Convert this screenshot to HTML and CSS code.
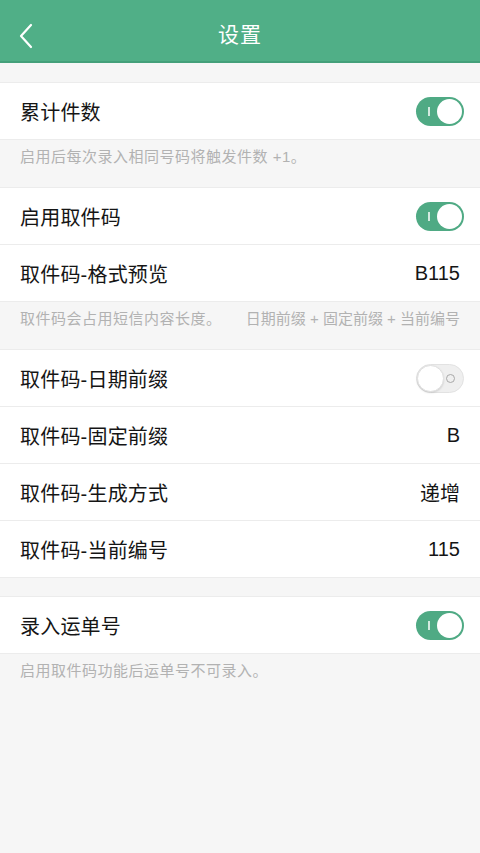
FILE: index.html
```html
<!DOCTYPE html>
<html lang="zh-CN">
<head>
<meta charset="utf-8">
<meta name="viewport" content="width=480">
<title>设置</title>
<link rel="stylesheet" href="styles.css">
</head>
<body>
<header class="topbar">
  <button class="back" aria-label="返回">
    <svg width="16" height="26" viewBox="0 0 16 26"><path d="M13 2 L3 13 L13 24" fill="none" stroke="#fff" stroke-width="2.2" stroke-linecap="round" stroke-linejoin="round"/></svg>
  </button>
  <h1 class="title">设置</h1>
</header>

<main class="content">
  <section class="group">
    <div class="row"><span class="label">累计件数</span><span class="switch on"><i class="mark"></i><i class="knob"></i></span></div>
  </section>
  <p class="note">启用后每次录入相同号码将触发件数 +1。</p>

  <section class="group">
    <div class="row"><span class="label">启用取件码</span><span class="switch on"><i class="mark"></i><i class="knob"></i></span></div>
    <div class="row"><span class="label">取件码-格式预览</span><span class="value">B115</span></div>
  </section>
  <p class="note split"><span>取件码会占用短信内容长度。</span><span class="formula">日期前缀 + 固定前缀 + 当前编号</span></p>

  <section class="group">
    <div class="row"><span class="label">取件码-日期前缀</span><span class="switch off"><i class="knob"></i><i class="ring"></i></span></div>
    <div class="row"><span class="label">取件码-固定前缀</span><span class="value">B</span></div>
    <div class="row"><span class="label">取件码-生成方式</span><span class="value">递增</span></div>
    <div class="row"><span class="label">取件码-当前编号</span><span class="value">115</span></div>
  </section>

  <section class="group spaced">
    <div class="row"><span class="label">录入运单号</span><span class="switch on"><i class="mark"></i><i class="knob"></i></span></div>
  </section>
  <p class="note">启用取件码功能后运单号不可录入。</p>
</main>
</body>
</html>
```

FILE: styles.css
```css
* { box-sizing: border-box; }
html, body { margin: 0; padding: 0; }
body {
  width: 480px;
  min-height: 853px;
  background: #f6f6f6;
  font-family: "Liberation Sans", "Noto Sans CJK SC", sans-serif;
  color: #151515;
}
.topbar {
  height: 63px;
  padding-top: 5px;
  background: #50af87;
  border-bottom: 2px solid #44a07a;
  display: flex;
  align-items: center;
  justify-content: center;
  position: relative;
}
.back {
  position: absolute;
  left: 18px;
  top: 23px;
  padding: 0;
  border: 0;
  background: none;
  display: flex;
}
.title {
  margin: 0;
  font-size: 21px;
  font-weight: normal;
  color: #fff;
  letter-spacing: 1px;
}
.content {
  padding-top: 19px;
}
.group {
  background: #fff;
  border-top: 1px solid #ececec;
}
.group.spaced { margin-top: 18px; }
.row {
  height: 57px;
  border-bottom: 1px solid #ececec;
  display: flex;
  align-items: center;
  justify-content: space-between;
  padding: 0 16px 0 20px;
}
.label {
  font-size: 20px;
  letter-spacing: 0.2px;
}
.value {
  font-size: 20px;
  padding-right: 4px;
}
.note {
  margin: 0;
  height: 47px;
  padding: 7px 20px 0 20px;
  font-size: 15px;
  line-height: 20px;
  color: #b2b2b2;
  letter-spacing: 0.5px;
}
.note.split {
  display: flex;
  justify-content: space-between;
}
.note .formula { letter-spacing: 0; }
.switch {
  position: relative;
  width: 48px;
  height: 29px;
  border-radius: 15px;
  display: block;
  margin-top: 1px;
}
.switch.on { background: #4faa84; }
.switch.off {
  background: #efefef;
  border: 1px solid #e2e2e2;
}
.switch .knob {
  position: absolute;
  top: 2px;
  width: 25px;
  height: 25px;
  border-radius: 50%;
  background: #fff;
}
.switch.on .knob { right: 2px; }
.switch.off .knob {
  left: 0;
  top: 0;
  width: 27px;
  height: 27px;
  border: 1px solid #e0e0e0;
  box-shadow: 0 1px 2px rgba(0,0,0,0.12);
}
.switch .mark {
  position: absolute;
  left: 12px;
  top: 10px;
  width: 1.5px;
  height: 9px;
  background: rgba(255,255,255,0.75);
}
.switch .ring {
  position: absolute;
  right: 8px;
  top: 9px;
  width: 9px;
  height: 9px;
  border-radius: 50%;
  border: 1.5px solid #a8a8a8;
}
```
